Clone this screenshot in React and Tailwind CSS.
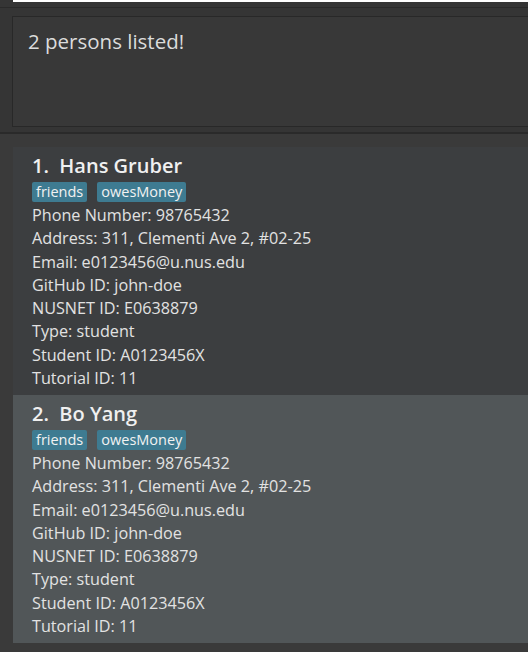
import React from "react";

const persons = [
  { name: "Hans Gruber", selected: false },
  { name: "Bo Yang", selected: true },
];

const fields = [
  "Phone Number: 98765432",
  "Address: 311, Clementi Ave 2, #02-25",
  "Email: e0123456@u.nus.edu",
  "GitHub ID: john-doe",
  "NUSNET ID: E0638879",
  "Type: student",
  "Student ID: A0123456X",
  "Tutorial ID: 11",
];

function Card({ idx, p }) {
  return (
    <div
      className={
        "h-[248px] pl-[19px] pt-[4px] " +
        (p.selected ? "bg-[#515658]" : "bg-[#3c3e40]")
      }
    >
      <div className="text-[20px] font-semibold leading-[30px] text-[#f0f0f0] whitespace-pre">
        {idx}.  {p.name}
      </div>
      <div className="flex gap-[10px] mt-[1px]">
        {["friends", "owesMoney"].map((t) => (
          <span
            key={t}
            className="bg-[#3e7b91] text-[#f2f2f2] text-[14.5px] leading-[20px] px-[4px] rounded-[2px]"
          >
            {t}
          </span>
        ))}
      </div>
      <div className="mt-[2px]">
        {fields.map((f) => (
          <div key={f} className="text-[16.2px] leading-[23.3px] text-[#e2e2e2] whitespace-nowrap">
            {f}
          </div>
        ))}
      </div>
    </div>
  );
}

export default function App() {
  return (
    <div
      className="w-[528px] h-[652px] bg-[#383838] overflow-hidden flex flex-col"
      style={{ fontFamily: '"Open Sans", "Noto Sans", sans-serif' }}
    >
      <div className="h-[7px] bg-[#353535] pl-[13px] shrink-0">
        <div className="h-[2px] bg-white" />
      </div>
      <div className="h-[1px] bg-[#2a2a2a] shrink-0" />
      <div className="h-[124px] bg-[#353535] pl-[12px] pt-[8px] shrink-0">
        <div className="h-[111px] border border-[#282828] border-r-0 bg-[#383838] pl-[15px] pt-[10px]">
          <div className="text-[20.5px] leading-[28px] text-[#dcdcdc]">2 persons listed!</div>
        </div>
      </div>
      <div className="h-[2px] bg-[#2a2a2a] shrink-0" />
      <div className="flex-1 bg-[#3a3a3a] pl-[13px] pt-[13px]">
        {persons.map((p, i) => (
          <Card key={p.name} idx={i + 1} p={p} />
        ))}
      </div>
    </div>
  );
}
